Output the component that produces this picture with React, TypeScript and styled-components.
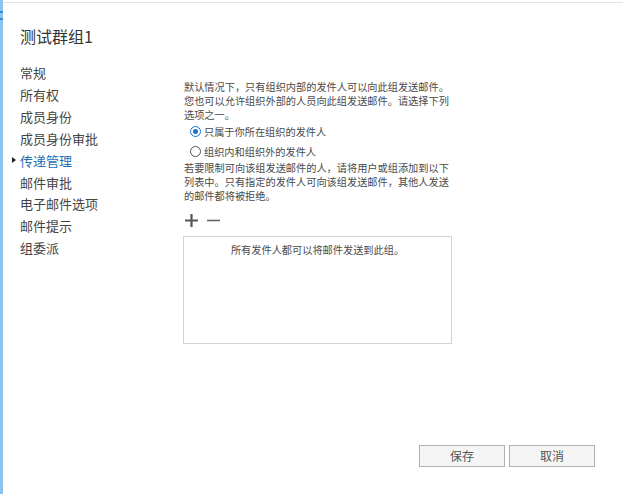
import React from "react";
import styled, { createGlobalStyle } from "styled-components";

const GlobalStyle = createGlobalStyle`
  html, body { margin: 0; padding: 0; background: #ffffff; }
  body {
    font-family: "Noto Sans CJK SC", "Noto Sans", "Liberation Sans", sans-serif;
    color: #444;
  }
  * { box-sizing: border-box; }
`;

const Frame = styled.div`
  display: flex;
  width: 623px;
  height: 494px;
  overflow: hidden;
  background: #fff;
`;

const Edge = styled.div`
  width: 3px;
  flex: none;
  background: #8fc3ef;
  display: flex;
  flex-direction: column;
  padding-top: 11px;
  gap: 5px;
`;

const EdgeMark = styled.span`
  display: block;
  height: 2px;
  background: #3a8ad6;
`;

const Main = styled.div`
  flex: 1;
  display: flex;
  flex-direction: column;
  margin-top: 2px;
  border-top: 1px solid #e2e2e2;
`;

const Title = styled.h1`
  margin: 0;
  padding: 23px 0 0 17px;
  font-size: 16px;
  line-height: 20px;
  font-weight: 400;
  color: #333;
`;

const Body = styled.div`
  display: flex;
  margin-top: 16px;
`;

const Nav = styled.ul`
  list-style: none;
  margin: 0;
  padding: 0;
  width: 181px;
  flex: none;
`;

const NavItem = styled.li<{ $active?: boolean }>`
  position: relative;
  padding-left: 17px;
  font-size: 13px;
  line-height: 21.9px;
  color: ${(p) => (p.$active ? "#1f6fb6" : "#444")};
  &::before {
    content: "";
    display: ${(p) => (p.$active ? "block" : "none")};
    position: absolute;
    left: 9px;
    top: 7px;
    width: 0;
    height: 0;
    border-top: 3.5px solid transparent;
    border-bottom: 3.5px solid transparent;
    border-left: 4px solid #222;
  }
`;

const Content = styled.div`
  padding-top: 18px;
  width: 270px;
`;

const Para = styled.p`
  margin: 0;
  font-size: 10.2px;
  line-height: 14px;
  color: #4a4a4a;
  letter-spacing: 0;
`;

const RadioRow = styled.label`
  display: flex;
  align-items: center;
  height: 19.5px;
  padding-left: 6px;
  gap: 3px;
  font-size: 10.2px;
  color: #4a4a4a;
`;

const RadioDot = styled.span<{ $checked?: boolean }>`
  width: 11px;
  height: 11px;
  border-radius: 50%;
  flex: none;
  border: 1.5px solid ${(p) => (p.$checked ? "#1a73c9" : "#555")};
  display: flex;
  align-items: center;
  justify-content: center;
  &::after {
    content: "";
    width: 5px;
    height: 5px;
    border-radius: 50%;
    background: #1a73c9;
    display: ${(p) => (p.$checked ? "block" : "none")};
  }
`;

const Tools = styled.div`
  display: flex;
  align-items: center;
  gap: 9px;
  height: 16px;
  margin-top: 9px;
  padding-left: 1px;
`;

const ToolIcon = styled.svg`
  display: block;
`;

const ListBox = styled.div`
  margin-top: 8px;
  margin-left: -1px;
  width: 269px;
  height: 108px;
  border: 1px solid #cfd4d9;
  padding-top: 6px;
  text-align: center;
  font-size: 10.2px;
  line-height: 14px;
  color: #4a4a4a;
`;

const Footer = styled.div`
  margin-top: auto;
  display: flex;
  justify-content: flex-end;
  gap: 4px;
  padding: 0 28px 27px 0;
`;

const Button = styled.button`
  width: 86px;
  height: 22px;
  border: 1px solid #adb1b4;
  background: #f5f5f5;
  font-family: inherit;
  font-size: 12px;
  line-height: 18px;
  color: #555;
  padding: 0;
`;

const navItems = [
  "常规",
  "所有权",
  "成员身份",
  "成员身份审批",
  "传递管理",
  "邮件审批",
  "电子邮件选项",
  "邮件提示",
  "组委派",
];

export default function App() {
  return (
    <>
      <GlobalStyle />
      <Frame>
        <Edge>
          <EdgeMark />
          <EdgeMark />
        </Edge>
        <Main>
          <Title>测试群组1</Title>
          <Body>
            <Nav>
              {navItems.map((t) => (
                <NavItem key={t} $active={t === "传递管理"}>
                  {t}
                </NavItem>
              ))}
            </Nav>
            <Content>
              <Para>
                默认情况下，只有组织内部的发件人可以向此组发送邮件。
                您也可以允许组织外部的人员向此组发送邮件。请选择下列
                选项之一。
              </Para>
              <RadioRow>
                <RadioDot $checked />
                只属于你所在组织的发件人
              </RadioRow>
              <RadioRow>
                <RadioDot />
                组织内和组织外的发件人
              </RadioRow>
              <Para>
                若要限制可向该组发送邮件的人，请将用户或组添加到以下
                列表中。只有指定的发件人可向该组发送邮件，其他人发送
                的邮件都将被拒绝。
              </Para>
              <Tools>
                <ToolIcon width="13" height="13" viewBox="0 0 13 13">
                  <path d="M6.5 0v13M0 6.5h13" stroke="#555" strokeWidth="2.2" />
                </ToolIcon>
                <ToolIcon width="13" height="13" viewBox="0 0 13 13">
                  <path d="M0 6.5h13" stroke="#666" strokeWidth="1.6" />
                </ToolIcon>
              </Tools>
              <ListBox>所有发件人都可以将邮件发送到此组。</ListBox>
            </Content>
          </Body>
          <Footer>
            <Button>保存</Button>
            <Button>取消</Button>
          </Footer>
        </Main>
      </Frame>
    </>
  );
}
